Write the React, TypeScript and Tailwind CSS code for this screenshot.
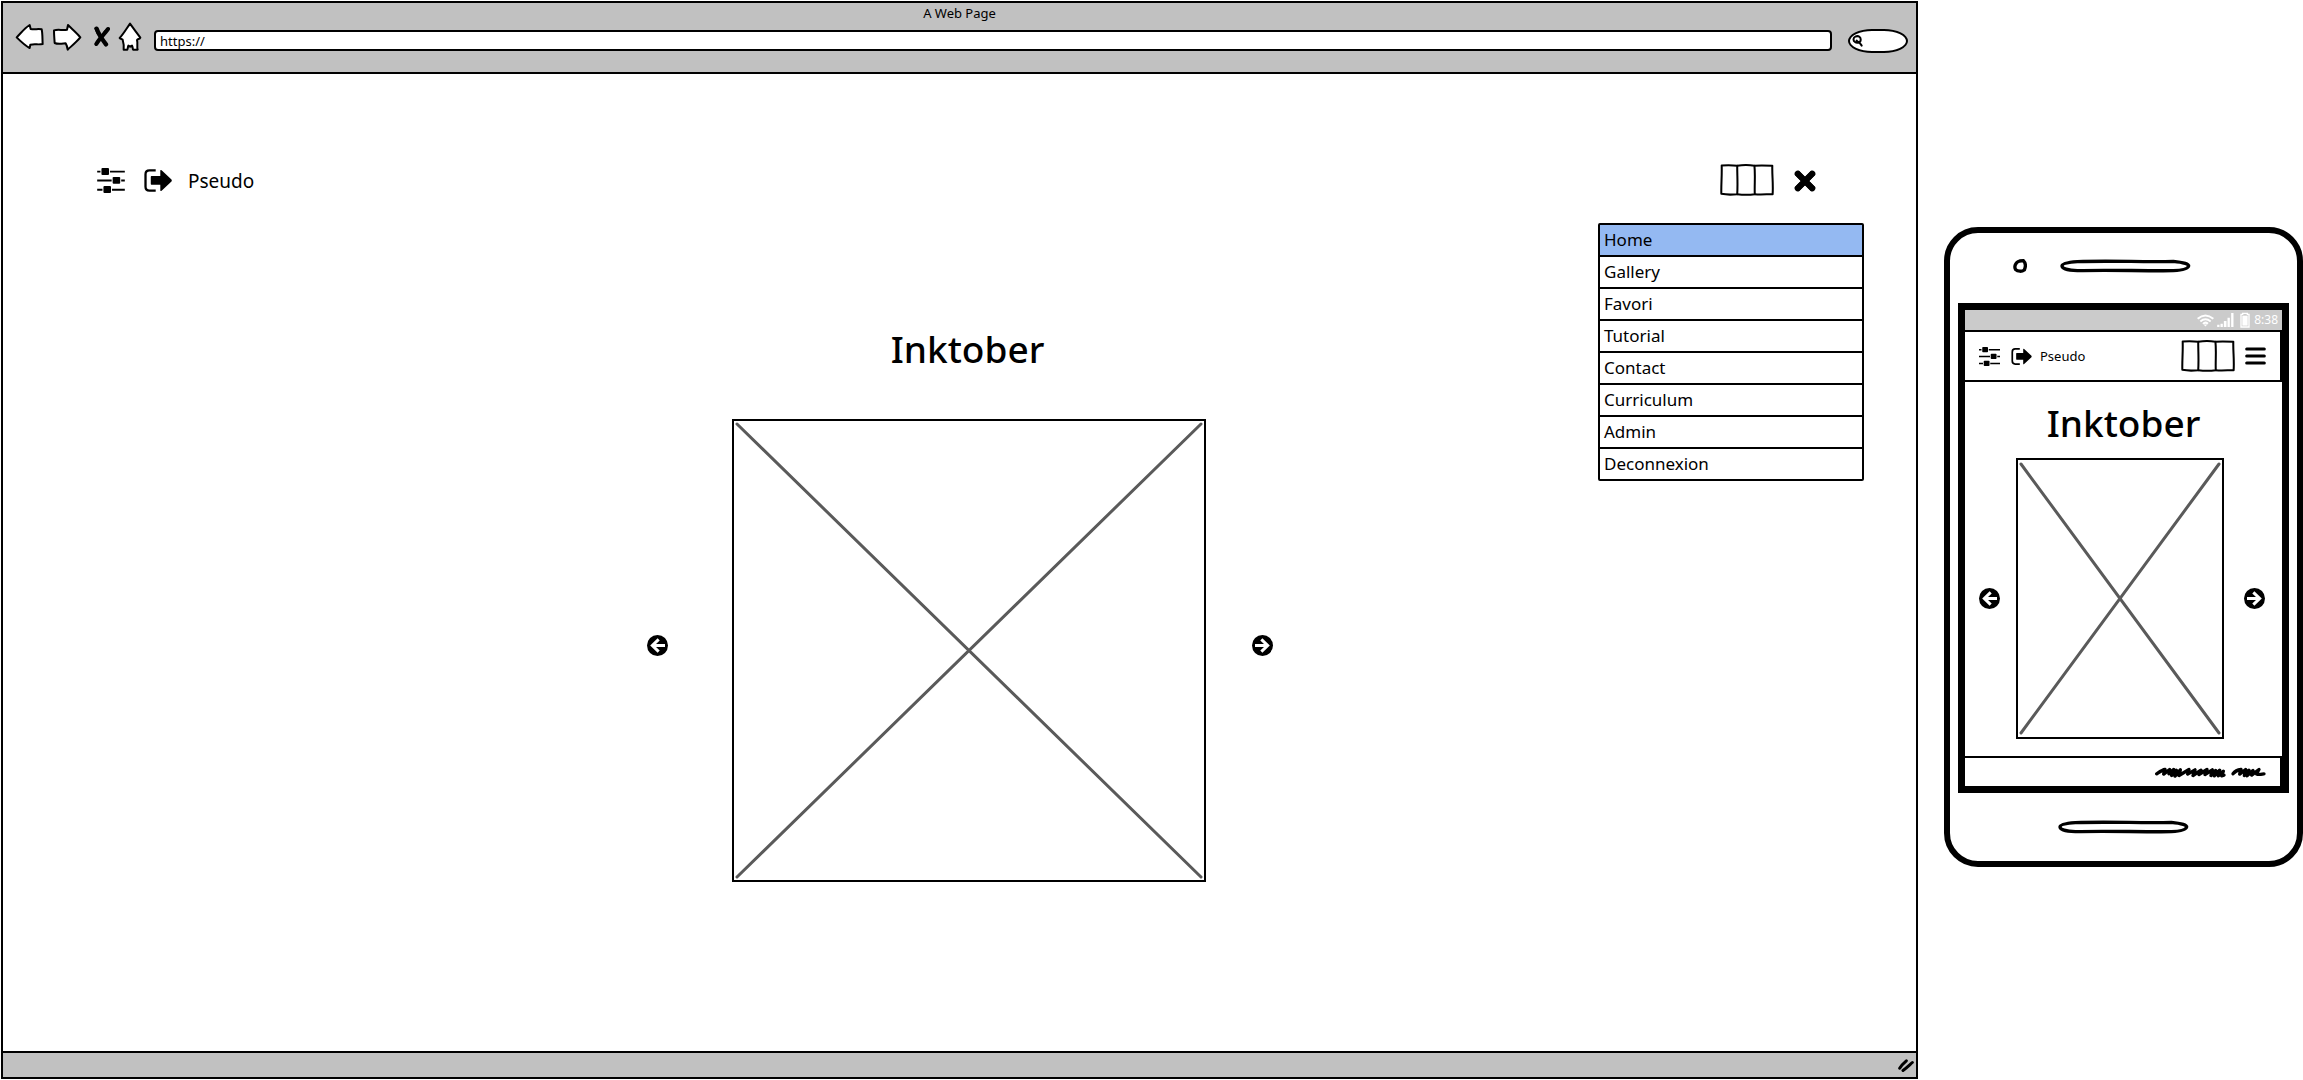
import React from "react";

const menuItems = ["Home", "Gallery", "Favori", "Tutorial", "Contact", "Curriculum", "Admin", "Deconnexion"];

function SlidersIcon({ className }: { className: string }) {
  return (
    <svg viewBox="0 0 84 76" className={className} aria-hidden="true">
      <path d="M0 11H84M0 38H84M0 66H84" stroke="black" strokeWidth="6" />
      <path d="M10 11H39M44 38H73M16 66H45" stroke="white" strokeWidth="10" />
      <rect x="13" y="0" width="23" height="21" rx="3" />
      <rect x="47" y="27" width="23" height="21" rx="3" />
      <rect x="19" y="55" width="23" height="21" rx="3" />
    </svg>
  );
}

function ExitIcon({ className }: { className: string }) {
  return (
    <svg viewBox="0 0 84 70" className={className} aria-hidden="true">
      <path d="M35 4H16Q4 4 4 16V54Q4 66 16 66H35" fill="none" stroke="black" strokeWidth="7" />
      <path d="M22 21H49V5Q49 1 53 4L83 32Q85 35 83 38L53 66Q49 69 49 65V48H22Q20 48 20 45V24Q20 21 22 21Z" />
    </svg>
  );
}

function PanelsIcon() {
  return (
    <svg viewBox="0 0 160 94" className="h-8 w-[54px] shrink-0" fill="none" stroke="black" strokeWidth="6" strokeLinejoin="round" aria-hidden="true">
      <path d="M5 4C20 3 38 3 51 5C51 35 53 60 51 89C35 91 20 91 4 88C3 60 6 40 5 4Z" />
      <path d="M51 5C68 2 86 2 102 5C105 30 102 60 103 89C88 91 68 91 51 89" />
      <path d="M102 5C118 3 138 4 155 5C154 32 158 56 156 89C138 89 120 91 103 89" />
    </svg>
  );
}

function CircleArrowIcon({ flip = false }: { flip?: boolean }) {
  return (
    <svg viewBox="0 0 63 63" className={flip ? "size-[21px] rotate-180" : "size-[21px]"} aria-hidden="true">
      <circle cx="31.500" cy="31.500" r="31.500" />
      <path d="M54 31.500H18M35 13L16 31.500L35 50" fill="none" stroke="white" strokeWidth="9" />
    </svg>
  );
}

function ArrowButton({ direction }: { direction: "left" | "right" }) {
  return (
    <button type="button" aria-label={direction === "left" ? "Previous image" : "Next image"} className="shrink-0">
      <CircleArrowIcon flip={direction === "right"} />
    </button>
  );
}

function Placeholder({ className }: { className: string }) {
  return (
    <div className={className}>
      <svg viewBox="0 0 100 100" preserveAspectRatio="none" className="size-full overflow-visible" role="img" aria-label="Image placeholder">
        <path d="M0 0L100 100M100 0L0 100" stroke="#5a5a5a" strokeWidth="3" strokeLinecap="round" vectorEffect="non-scaling-stroke" />
      </svg>
    </div>
  );
}

function BrowserBar() {
  return (
    <header className="h-[71px] border-b-2 border-black bg-[#c1c1c1]">
      <h1 className="h-5 text-center text-[13px] leading-5">A Web Page</h1>
      <div className="flex h-[29px] items-center gap-2 pr-2 pl-3">
        <button type="button" aria-label="Back" className="mb-0.5">
          <svg viewBox="45 69 87 84" className="h-7 w-[29px]" fill="white" stroke="black" strokeWidth="6" strokeLinejoin="round">
            <path d="M50 112C62 100 74 84 89 75L92 87C104 89 114 86 125 88C128 102 127 118 128 132C116 135 104 131 91 134L89 144C74 136 62 124 50 112Z" />
          </svg>
        </button>
        <button type="button" aria-label="Forward" className="mb-0.5">
          <svg viewBox="156 69 90 84" className="h-7 w-[30px]" fill="white" stroke="black" strokeWidth="6" strokeLinejoin="round">
            <path d="M162 91C175 87 188 92 201 89L204 75C217 88 230 98 241 112C230 125 217 136 203 149C202 142 201 136 197 130C186 131 174 134 164 129C163 116 162 104 162 91Z" />
          </svg>
        </button>
        <button type="button" aria-label="Stop" className="mb-0.5">
          <svg viewBox="270 75 60 63" className="h-[21px] w-5" fill="none" stroke="black" strokeLinecap="round">
            <path d="M290 83C295 98 304 112 318 130" strokeWidth="13" />
            <path d="M324 84C314 98 299 112 289 129" strokeWidth="12" />
            <path d="M286 82L294 100M326 83L314 92M288 131L296 118" strokeWidth="6" />
          </svg>
        </button>
        <button type="button" aria-label="Home page" className="mb-0.5">
          <svg viewBox="354 66 72 87" className="h-[29px] w-6" fill="white" stroke="black" strokeWidth="6" strokeLinejoin="round">
            <path d="M390 71C400 85 411 100 421 113C419 118 414 116 411 120C414 130 410 140 413 149H399C398 144 398 140 396 137L391 140L385 137C383 141 384 145 382 149H371C372 139 371 129 368 119C364 117 361 116 359 114C371 101 380 85 390 71Z" />
          </svg>
        </button>
        <input
          type="text"
          aria-label="Address"
          defaultValue="https://"
          className="mt-1.5 ml-1 h-[21px] min-w-0 flex-1 rounded-sm border-2 border-black bg-white pl-1 text-[13px] leading-4 outline-none"
        />
        <label className="mt-1.5 ml-2 flex h-6 w-[60px] shrink-0 items-center rounded-[24px/12px] border-2 border-black bg-white pl-0.5">
          <svg viewBox="0 0 33 36" className="h-3 w-[11px] shrink-0" fill="none" stroke="black" strokeWidth="6" strokeLinecap="round">
            <path d="M10 5C20 0 27 8 26 15C26 24 14 25 9 21C2 17 4 7 10 5ZM14 17C21 22 27 26 29 32" />
          </svg>
          <input type="search" aria-label="Search" className="w-full min-w-0 bg-transparent outline-none" />
        </label>
      </div>
    </header>
  );
}

function BrowserWindow() {
  return (
    <section className="mt-px mb-px ml-px flex min-w-0 flex-1 flex-col border-2 border-black">
      <BrowserBar />
      <div className="relative mt-[90px] mr-[52px] ml-[94px] flex h-8 items-center">
        <button type="button" aria-label="Settings">
          <SlidersIcon className="h-[25px] w-7" />
        </button>
        <button type="button" aria-label="Log out" className="ml-[19px]">
          <ExitIcon className="h-[23px] w-7" />
        </button>
        <span className="mt-0.5 ml-4 text-[19px] leading-6">Pseudo</span>
        <div className="mr-12 ml-auto flex items-center gap-5">
          <PanelsIcon />
          <button type="button" aria-label="Close menu" className="mt-0.5">
            <svg viewBox="0 0 66 66" className="size-[22px]" stroke="black" strokeWidth="18">
              <path d="M8 8L58 58M58 8L8 58" strokeLinecap="butt" />
              <path d="M11 11L55 55M55 11L11 55" strokeLinecap="round" />
            </svg>
          </button>
        </div>
        <nav aria-label="Main" className="absolute top-full right-0 mt-[27px] w-[266px] divide-y-2 divide-black rounded-xs border-2 border-black bg-white">
          {menuItems.map((item) => (
            <a key={item} href="#" className={item === "Home" ? "block bg-[#94b9f2] pl-1 text-[17px] leading-[30px]" : "block pl-1 text-[17px] leading-[30px]"}>
              {item}
            </a>
          ))}
        </nav>
      </div>
      <main className="flex flex-1 flex-col items-center">
        <h2 className="mt-[127px] pl-4 text-[37px] leading-[52px] font-medium">Inktober</h2>
        <div className="mt-11 flex items-center">
          <div className="flex pb-2.5">
            <ArrowButton direction="left" />
          </div>
          <Placeholder className="mr-[46px] ml-16 h-[463px] w-[474px] border-2 border-black p-[3px]" />
          <div className="flex pb-2.5">
            <ArrowButton direction="right" />
          </div>
        </div>
      </main>
      <footer className="flex h-[26px] items-center justify-end border-t-2 border-black bg-[#c1c1c1] pr-0.5">
        <svg viewBox="0 0 48 38" className="h-[13px] w-4" stroke="black" strokeWidth="9" strokeLinecap="round" aria-hidden="true">
          <path d="M5 27C11 17 18 11 25 5M15 34C25 27 34 18 43 10" fill="none" />
        </svg>
      </footer>
    </section>
  );
}

function Speaker() {
  return (
    <svg viewBox="0 0 393 42" className="h-3.5 w-[131px]" fill="white" stroke="black" strokeWidth="10" strokeLinejoin="round" aria-hidden="true">
      <path d="M52 8C150 4 260 10 340 7C372 10 388 16 386 21C384 30 360 34 340 35C240 36 140 32 52 35C24 34 6 28 6 21C6 14 24 10 52 8Z" />
    </svg>
  );
}

function Phone() {
  return (
    <section className="mt-3.5 ml-[26px] flex w-[359px] shrink-0 flex-col self-center rounded-[34px] border-[6px] border-black px-2">
      <div className="flex h-[70px] items-center pb-1 pl-[55px]">
        <svg viewBox="0 0 42 42" className="size-3.5" fill="white" stroke="black" strokeWidth="10" aria-hidden="true">
          <path d="M20 6L31 5C38 12 38 24 34 33C27 38 14 38 8 32C3 24 6 10 20 6Z" />
        </svg>
        <div className="ml-[33px]">
          <Speaker />
        </div>
      </div>
      <div className="flex flex-col border-[7px] border-black">
        <div className="flex h-5 items-center justify-end bg-[#cbcbcb] pr-1 text-white">
          <svg viewBox="0 0 51 38" className="h-[13px] w-[17px]" fill="none" stroke="white" strokeWidth="6" aria-label="Wi-Fi">
            <path d="M2 14Q25 -6 49 14M10 22Q25 9 41 22M18 29Q25 22 33 29" />
            <path d="M20 31L25 37L31 31Z" fill="white" stroke="none" />
          </svg>
          <svg viewBox="0 0 50 42" className="ml-[3px] h-3.5 w-[17px]" fill="white" aria-label="Signal">
            <path d="M0 35h7v7H0zM10 32h7v10h-7zM20 24h8v18h-8zM31 14h7v28h-7zM42 0h7v42h-7z" />
          </svg>
          <svg viewBox="0 0 30 48" className="ml-1.5 h-4 w-2.5" aria-label="Battery">
            <path d="M8 4H22V7H27V45H3V7H8Z" fill="none" stroke="white" strokeWidth="4" />
            <path d="M7 11H23V41H7Z" fill="white" />
          </svg>
          <span className="ml-1 text-[12px] leading-5">8:38</span>
        </div>
        <div className="flex h-[52px] items-center border-2 border-l-0 border-black pr-3.5 pl-3.5">
          <button type="button" aria-label="Settings">
            <SlidersIcon className="h-[19px] w-[21px]" />
          </button>
          <button type="button" aria-label="Log out" className="ml-[11px]">
            <ExitIcon className="h-[17px] w-[21px]" />
          </button>
          <span className="ml-2 text-[13px] leading-5">Pseudo</span>
          <div className="ml-auto flex items-center gap-2.5">
            <PanelsIcon />
            <button type="button" aria-label="Open menu">
              <svg viewBox="0 0 63 54" className="h-[18px] w-[21px]" stroke="black" strokeWidth="9" strokeLinecap="round">
                <path d="M5 6H58M5 27H58M5 48H58" />
              </svg>
            </button>
          </div>
        </div>
        <h2 className="mt-[15px] text-center text-[37px] leading-[52px] font-medium">Inktober</h2>
        <div className="mt-[9px] flex items-center justify-between pr-[17px] pl-3.5">
          <ArrowButton direction="left" />
          <Placeholder className="mr-1 h-[281px] w-[208px] border-2 border-black px-[3px] py-1" />
          <ArrowButton direction="right" />
        </div>
        <div className="mt-[17px] flex h-[30px] items-center justify-end border-t-2 border-r-2 border-black pr-3.5">
          <svg viewBox="0 0 333 32" className="h-[11px] w-[111px]" fill="none" stroke="black" strokeWidth="10" strokeLinecap="round" strokeLinejoin="round" aria-hidden="true">
            <path d="M5 20C14 14 22 8 30 7L26 21L44 7L42 20L56 7L50 25L64 9L60 27L76 8L72 25L102 7L98 21L120 8L114 25L138 9L132 22L156 7L150 22L172 8L168 25L182 10L178 26L194 9L190 26L205 12L200 26L207 24" />
            <path d="M234 20C240 12 250 8 258 7L254 21L272 7L268 25L282 9L276 26L294 10L290 24L312 7L304 20C314 24 322 20 327 20" />
          </svg>
        </div>
      </div>
      <div className="flex h-[68px] items-center justify-center">
        <Speaker />
      </div>
    </section>
  );
}

export default function App() {
  return (
    <div className="flex min-h-screen bg-white font-['Noto_Sans',sans-serif] text-black">
      <BrowserWindow />
      <Phone />
    </div>
  );
}
